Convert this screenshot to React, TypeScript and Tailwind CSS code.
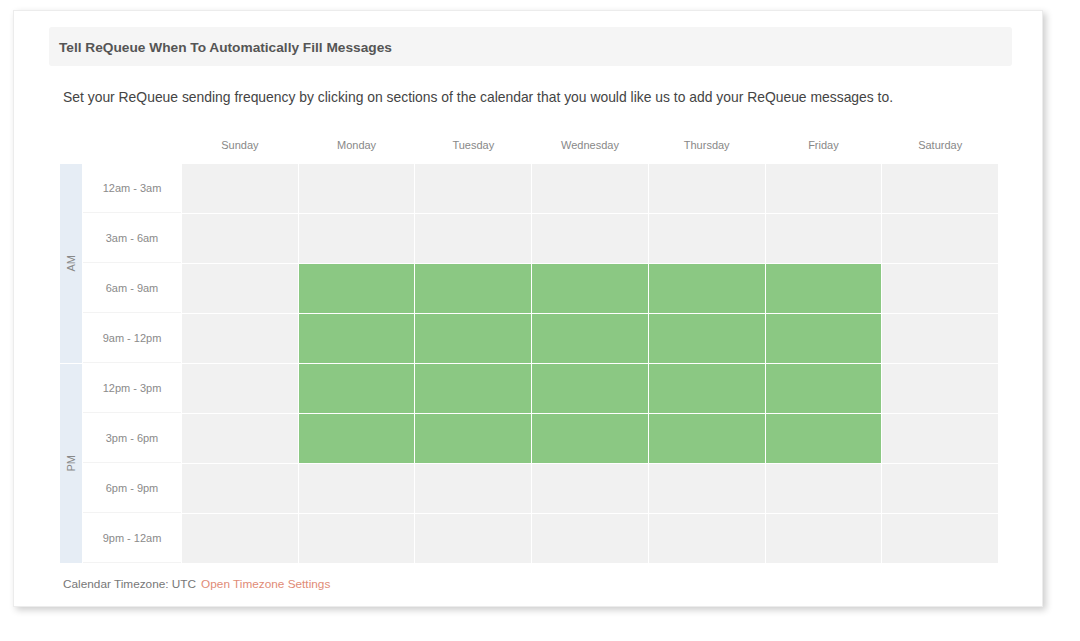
import React from "react";

const days = ["Sunday", "Monday", "Tuesday", "Wednesday", "Thursday", "Friday", "Saturday"];
const slots = [
  "12am - 3am",
  "3am - 6am",
  "6am - 9am",
  "9am - 12pm",
  "12pm - 3pm",
  "3pm - 6pm",
  "6pm - 9pm",
  "9pm - 12am",
];

function isActive(row: number, day: number) {
  return row >= 2 && row <= 5 && day >= 1 && day <= 5;
}

function Rows({ from, label }: { from: number; label: string }) {
  return (
    <>
      <div className="row-span-4 bg-[#e6edf5] flex items-center justify-center">
        <span className="-rotate-90 text-[11px] text-[#888888] whitespace-nowrap">{label}</span>
      </div>
      {slots.slice(from, from + 4).map((s, k) => {
        const r = k + from;
        return (
          <React.Fragment key={s}>
            <div className="bg-white border-b border-[#f3f3f3] flex items-center justify-center text-[11px] text-[#8a8a8a]">
              {s}
            </div>
            {days.map((d, i) => (
              <div key={d} className={isActive(r, i) ? "bg-[#8bc883]" : "bg-[#f1f1f1]"} />
            ))}
          </React.Fragment>
        );
      })}
    </>
  );
}

export default function App() {
  return (
    <div
      className="w-[1080px] h-[641px] bg-white overflow-hidden"
      style={{ fontFamily: '"Liberation Sans", Arial, sans-serif' }}
    >
      <div className="pt-[10px] pl-[13px]">
        <div className="w-[1030px] h-[597px] bg-white border border-[#ececec] shadow-[3px_3px_7px_rgba(0,0,0,0.2)] pt-[16px] pl-[35px] pr-[30px]">
          <div className="h-[39px] bg-[#f5f5f5] rounded-[3px] flex items-center px-[10px] pt-[3px]">
            <span className="text-[13.7px] font-bold text-[#555555]">
              Tell ReQueue When To Automatically Fill Messages
            </span>
          </div>
          <div className="pl-[11px] pr-[14px]">
            <p className="mt-[21px] pl-[3px] text-[13.9px] leading-[20px] text-[#444444]">
              Set your ReQueue sending frequency by clicking on sections of the calendar that you would like us to add your ReQueue messages to.
            </p>
            <div className="mt-[28px] grid grid-cols-[22px_98px_repeat(7,1fr)] gap-x-px h-[20px] items-center">
              <div />
              <div />
              {days.map((d) => (
                <div key={d} className="text-center text-[11px] text-[#888888]">
                  {d}
                </div>
              ))}
            </div>
            <div className="mt-[9px] grid grid-cols-[22px_98px_repeat(7,1fr)] grid-rows-[repeat(8,49px)] gap-px bg-white">
              <Rows from={0} label="AM" />
              <Rows from={4} label="PM" />
            </div>
            <div className="mt-[13px] pl-[3px] text-[11.8px] leading-[16px] flex gap-[5px]">
              <span className="text-[#777777]">Calendar Timezone: UTC</span>
              <span className="text-[#df8b76]">Open Timezone Settings</span>
            </div>
          </div>
        </div>
      </div>
    </div>
  );
}
